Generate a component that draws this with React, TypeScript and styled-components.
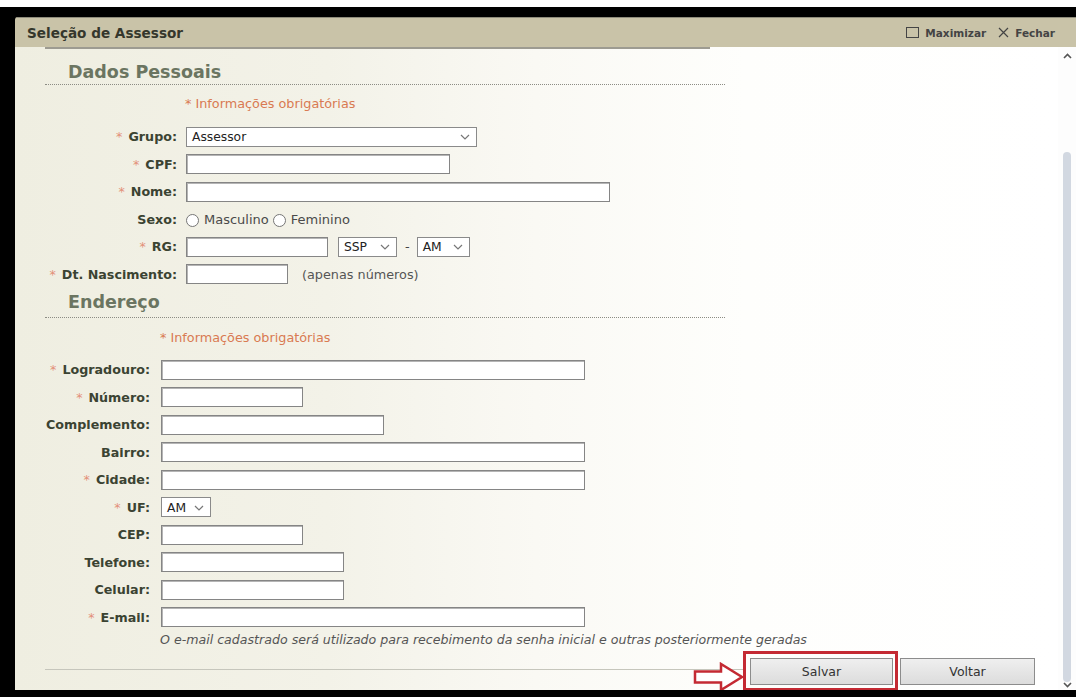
import styled, { createGlobalStyle } from 'styled-components';

const GlobalStyle = createGlobalStyle`
  html, body {
    margin: 0;
    padding: 0;
    background: #fff;
  }
  body {
    font-family: "DejaVu Sans", Verdana, sans-serif;
    color: #333;
  }
`;

const Frame = styled.div`
  margin-top: 7px;
  height: 690px;
  box-sizing: border-box;
  padding: 10px 0 7px 15px;
  background: #000;
`;

const Window = styled.div`
  height: 100%;
  display: flex;
  flex-direction: column;
  border-top-left-radius: 3px;
  overflow: hidden;
`;

const TitleBar = styled.div`
  height: 30px;
  flex: none;
  box-sizing: border-box;
  display: flex;
  align-items: center;
  justify-content: space-between;
  padding: 0 21px 0 12px;
  background: #c9c3a8;
  border-top: 1px solid #8f8c7c;
  h1 {
    margin: 0;
    font-size: 13.6px;
    font-weight: bold;
    color: #35372c;
  }
`;

const WindowActions = styled.div`
  display: flex;
  align-items: center;
  gap: 12px;
`;

const WindowAction = styled.span`
  display: flex;
  align-items: center;
  gap: 6px;
  font-size: 10.5px;
  font-weight: bold;
  color: #444;
  svg {
    display: block;
  }
`;

const Body = styled.div`
  flex: 1;
  min-height: 0;
  display: flex;
`;

const Content = styled.div`
  flex: 1;
  display: flex;
  flex-direction: column;
  padding: 0 23px 0 30px;
  background: linear-gradient(90deg, #efeee1 0%, #f3f2e8 30%, #faf9f4 50%, #fefefc 70%, #fff 100%);
`;

const TopRule = styled.div`
  width: 665px;
  border-top: 2px solid #9d9b91;
`;

const SectionTitle = styled.h2<{ $top: number; $bottom: number }>`
  margin: 0;
  width: 657px;
  padding: ${(p) => p.$top}px 0 ${(p) => p.$bottom}px 23px;
  line-height: 24px;
  font-size: 17.5px;
  font-weight: bold;
  color: #6b7561;
  border-bottom: 1px dotted #8c8c84;
`;

const Required = styled.div<{ $indent: number; $top: number; $bottom: number }>`
  padding: ${(p) => p.$top}px 0 ${(p) => p.$bottom}px ${(p) => p.$indent}px;
  line-height: 18px;
  font-size: 12.8px;
  color: #d97a52;
`;

const Fields = styled.div`
  display: flex;
  flex-direction: column;
`;

const FieldRow = styled.div<{ $label: number; $gap: number }>`
  height: 27.5px;
  display: grid;
  grid-template-columns: ${(p) => p.$label}px 1fr;
  column-gap: ${(p) => p.$gap}px;
  align-items: center;
`;

const Label = styled.label`
  text-align: right;
  white-space: nowrap;
  font-size: 12.7px;
  font-weight: bold;
  color: #3b4332;
`;

const Star = styled.span`
  color: #e39079;
  font-weight: normal;
  margin-right: 6px;
`;

const Controls = styled.div`
  display: flex;
  align-items: center;
  font-size: 12.8px;
  color: #444;
`;

const TextInput = styled.input<{ $w: number }>`
  width: ${(p) => p.$w}px;
  height: 20px;
  box-sizing: border-box;
  margin: 0;
  padding: 0 4px;
  border: 1px solid #858585;
  box-shadow: inset 1px 1px 0 #b5b5b5;
  background: #fff;
  font: 12px "DejaVu Sans", Verdana, sans-serif;
`;

const SelectBox = styled.div<{ $w: number }>`
  width: ${(p) => p.$w}px;
  height: 20px;
  box-sizing: border-box;
  display: flex;
  align-items: center;
  justify-content: space-between;
  padding: 1px 6px 0 5px;
  border: 1px solid #8a8a8a;
  background: #fff;
  font-size: 12.3px;
  color: #222;
`;

const Dash = styled.span`
  margin: 0 7px 0 8px;
`;

const Hint = styled.span`
  margin-left: 14px;
  color: #555;
`;

const RadioOption = styled.label`
  display: flex;
  align-items: center;
  gap: 5px;
  margin-right: 4px;
  font-size: 13px;
  color: #4a4a4a;
`;

const RadioDot = styled.span`
  width: 11px;
  height: 11px;
  margin-top: 2px;
  border: 1px solid #767676;
  border-radius: 50%;
  background: #fff;
`;

const Note = styled.div`
  margin: 1px 0 0 115px;
  line-height: 16px;
  font-size: 12.6px;
  font-style: italic;
  color: #555;
  white-space: nowrap;
`;

const Footer = styled.div`
  display: flex;
  align-items: flex-start;
  margin-top: 10px;
`;

const FooterRule = styled.div`
  flex: 1;
  margin-top: 11px;
  border-top: 1px solid #c6c6bc;
`;

const Buttons = styled.div`
  display: flex;
  gap: 7px;
  margin-left: 5px;
`;

const Button = styled.button<{ $w: number }>`
  width: ${(p) => p.$w}px;
  height: 27px;
  margin: 0;
  border: 1px solid #8c8c8c;
  background: linear-gradient(#efefef, #dcdcdc);
  font: 12.5px "DejaVu Sans", Verdana, sans-serif;
  color: #333;
`;

// red callout drawn around the save button
const Callout = styled.span`
  position: relative;
  display: flex;
  &::after {
    content: '';
    position: absolute;
    left: -7px;
    right: -5px;
    top: -7px;
    bottom: -6px;
    border: 3px solid #c42a33;
  }
  svg {
    position: absolute;
    left: -57px;
    top: 4px;
  }
`;

const ScrollTrack = styled.div`
  width: 18px;
  flex: none;
  display: flex;
  flex-direction: column;
  align-items: center;
  background: #fdfdfd;
`;

const Thumb = styled.div`
  width: 8px;
  height: 530px;
  margin-top: 93px;
  border-radius: 4px;
  background: #d2d8e1;
`;

const Chevron = ({ up }: { up?: boolean }) => (
  <svg width="9" height="6" viewBox="0 0 9 6" style={{ marginTop: up ? 6 : 'auto', marginBottom: up ? 0 : 2 }}>
    <path d={up ? 'M1 5 L4.5 1.5 L8 5' : 'M1 1 L4.5 4.5 L8 1'} fill="none" stroke="#555" strokeWidth="1.6" />
  </svg>
);

const Caret = () => (
  <svg width="10" height="6" viewBox="0 0 10 6">
    <path d="M1 1 L5 5 L9 1" fill="none" stroke="#777" strokeWidth="1.2" />
  </svg>
);

const Select = ({ w, value }: { w: number; value: string }) => (
  <SelectBox $w={w}>
    <span>{value}</span>
    <Caret />
  </SelectBox>
);

type Field = { label: string; req?: boolean; width?: number; select?: string };

const addressFields: Field[] = [
  { label: 'Logradouro:', req: true, width: 424 },
  { label: 'Número:', req: true, width: 142 },
  { label: 'Complemento:', width: 223 },
  { label: 'Bairro:', width: 424 },
  { label: 'Cidade:', req: true, width: 424 },
  { label: 'UF:', req: true, select: 'AM' },
  { label: 'CEP:', width: 142 },
  { label: 'Telefone:', width: 183 },
  { label: 'Celular:', width: 183 },
  { label: 'E-mail:', req: true, width: 424 },
];

const FieldLabel = ({ text, req }: { text: string; req?: boolean }) => (
  <Label>
    {req && <Star>*</Star>}
    {text}
  </Label>
);

export default function App() {
  return (
    <>
      <GlobalStyle />
      <Frame>
        <Window>
          <TitleBar>
            <h1>Seleção de Assessor</h1>
            <WindowActions>
              <WindowAction>
                <svg width="13" height="11" viewBox="0 0 13 11">
                  <rect x="0.5" y="0.5" width="12" height="10" fill="none" stroke="#444" />
                </svg>
                Maximizar
              </WindowAction>
              <WindowAction>
                <svg width="11" height="11" viewBox="0 0 11 11">
                  <path d="M1 1 L10 10 M10 1 L1 10" stroke="#444" strokeWidth="1.2" />
                </svg>
                Fechar
              </WindowAction>
            </WindowActions>
          </TitleBar>
          <Body>
            <Content>
              <TopRule />
              <SectionTitle $top={11} $bottom={0}>Dados Pessoais</SectionTitle>
              <Required $indent={140} $top={10} $bottom={10}>* Informações obrigatórias</Required>
              <Fields>
                <FieldRow $label={132} $gap={9}>
                  <FieldLabel text="Grupo:" req />
                  <Controls>
                    <Select w={291} value="Assessor" />
                  </Controls>
                </FieldRow>
                <FieldRow $label={132} $gap={9}>
                  <FieldLabel text="CPF:" req />
                  <Controls>
                    <TextInput $w={264} />
                  </Controls>
                </FieldRow>
                <FieldRow $label={132} $gap={9}>
                  <FieldLabel text="Nome:" req />
                  <Controls>
                    <TextInput $w={424} />
                  </Controls>
                </FieldRow>
                <FieldRow $label={132} $gap={9}>
                  <FieldLabel text="Sexo:" />
                  <Controls>
                    <RadioOption>
                      <RadioDot />
                      Masculino
                    </RadioOption>
                    <RadioOption>
                      <RadioDot />
                      Feminino
                    </RadioOption>
                  </Controls>
                </FieldRow>
                <FieldRow $label={132} $gap={9}>
                  <FieldLabel text="RG:" req />
                  <Controls>
                    <TextInput $w={142} />
                    <span style={{ width: 10 }} />
                    <Select w={59} value="SSP" />
                    <Dash>-</Dash>
                    <Select w={53} value="AM" />
                  </Controls>
                </FieldRow>
                <FieldRow $label={132} $gap={9}>
                  <FieldLabel text="Dt. Nascimento:" req />
                  <Controls>
                    <TextInput $w={102} />
                    <Hint>(apenas números)</Hint>
                  </Controls>
                </FieldRow>
              </Fields>

              <SectionTitle $top={2} $bottom={3}>Endereço</SectionTitle>
              <Required $indent={115} $top={11} $bottom={9}>* Informações obrigatórias</Required>
              <Fields>
                {addressFields.map((f) => (
                  <FieldRow key={f.label} $label={105} $gap={11}>
                    <FieldLabel text={f.label} req={f.req} />
                    <Controls>
                      {f.select ? <Select w={50} value={f.select} /> : <TextInput $w={f.width ?? 142} />}
                    </Controls>
                  </FieldRow>
                ))}
              </Fields>
              <Note>O e-mail cadastrado será utilizado para recebimento da senha inicial e outras posteriormente geradas</Note>

              <Footer>
                <FooterRule />
                <Buttons>
                  <Callout>
                    <svg width="52" height="30" viewBox="0 0 52 30">
                      <path
                        d="M2 9.5 H28 V2 L49 15 L28 28 V20.5 H2 Z"
                        fill="#fff"
                        stroke="#c42a33"
                        strokeWidth="2.5"
                        strokeLinejoin="miter"
                      />
                    </svg>
                    <Button $w={143}>Salvar</Button>
                  </Callout>
                  <Button $w={135}>Voltar</Button>
                </Buttons>
              </Footer>
            </Content>
            <ScrollTrack>
              <Chevron up />
              <Thumb />
              <Chevron />
            </ScrollTrack>
          </Body>
        </Window>
      </Frame>
    </>
  );
}
